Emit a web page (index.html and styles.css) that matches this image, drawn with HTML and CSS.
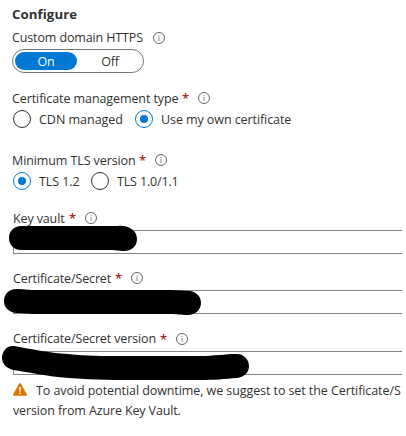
FILE: index.html
```
<!DOCTYPE html>
<html lang="en">
<head>
<meta charset="utf-8">
<title>Configure</title>
<link rel="stylesheet" href="styles.css">
</head>
<body>
<svg class="defs" width="0" height="0" aria-hidden="true">
  <symbol id="info" viewBox="0 0 12 12"><circle cx="6" cy="6" r="5.5" fill="none" stroke="#666" stroke-width="1"/><path d="M6 5v4M6 3v1.2" stroke="#888" stroke-width="1" fill="none"/></symbol>
</svg>
<main class="panel">
  <h1 class="title">Configure</h1>
  <div class="label https"><span class="text">Custom domain HTTPS</span><svg class="info"><use href="#info"/></svg></div>
  <div class="toggle"><span class="on">On</span><span class="off">Off</span></div>

  <div class="label cert-type"><span class="text">Certificate management type</span><b class="req">*</b><svg class="info"><use href="#info"/></svg></div>
  <div class="radios">
    <span class="radio"></span><span class="option cdn">CDN managed</span>
    <span class="radio checked"></span><span class="option own">Use my own certificate</span>
  </div>

  <div class="label tls"><span class="text">Minimum TLS version</span><b class="req">*</b><svg class="info"><use href="#info"/></svg></div>
  <div class="radios">
    <span class="radio checked"></span><span class="option tls12">TLS 1.2</span>
    <span class="radio"></span><span class="option tls10">TLS 1.0/1.1</span>
  </div>

  <div class="label vault"><span class="text">Key vault</span><b class="req">*</b><svg class="info"><use href="#info"/></svg></div>
  <div class="field"><svg class="mark" width="250" height="36" viewBox="0 -6 250 36"><path d="M21 -4H118C126 -5 137 -1 137 9C137 17 131 21 124 21C118 21 116 20 108 20H21C13 20 9 14 9 8C9 1 14 -4 21 -4Z"/></svg></div>

  <div class="label secret"><span class="text">Certificate/Secret</span><b class="req">*</b><svg class="info"><use href="#info"/></svg></div>
  <div class="field"><svg class="mark" width="250" height="36" viewBox="0 -6 250 36"><path d="M16 -1C24 -1 26 0 35 0H170C178 0 184 1 190 1C197 2 201 7 201 13C201 20 195 25 188 25C180 25 177 24 168 24H35C27 24 22 23 16 23C8 22 4 17 4 11C4 4 9 -1 16 -1Z"/></svg></div>

  <div class="label version"><span class="text">Certificate/Secret version</span><b class="req">*</b><svg class="info"><use href="#info"/></svg></div>
  <div class="field"><svg class="mark" width="250" height="36" viewBox="0 -6 250 36"><path d="M14 -5C32 -2 48 2 68 3C88 5 100 5 125 5H200C214 5 225 3 237 3C244 3 249 9 249 15C249 22 244 26 237 27C225 28 214 29 200 29H125C98 29 78 28 58 26C40 24 28 21 13 19C6 17 2 12 2 7C2 0 7 -6 14 -5Z"/></svg></div>

  <div class="notice">
    <div class="line"><svg class="warn" width="14" height="13" viewBox="0 0 14 13"><path d="M6.1.7Q7 -.5 7.9.7L13.8 11.3Q14.2 12.7 12.9 12.7H1.1Q-.2 12.7.2 11.3Z" fill="#db7500"/><path d="M6.1 4H7.9L7.6 8.5H6.4Z" fill="#fff"/><circle cx="7" cy="10.3" r=".9" fill="#fff"/></svg><span class="sentence">To avoid potential downtime, we suggest to set the Certificate/S</span></div>
    <div class="line"><span class="closing">version from Azure Key Vault.</span></div>
  </div>
</main>
</body>
</html>
```
FILE: styles.css
```
* { box-sizing: border-box; }
body {
  margin: 0;
  background: #fff;
  color: #323130;
  font: 12.5px/20px "Open Sans", "Noto Sans", sans-serif;
  letter-spacing: -.13px;
  overflow: hidden;
}
.defs { display: block; height: 0; }
.panel { width: 402px; padding: 4px 0 0 12px; height: 436px; }
.title { margin: 0 0 3px; font-size: 13.2px; line-height: 20px; font-weight: 700; letter-spacing: .1px; }
.label { display: flex; align-items: center; height: 22px; white-space: nowrap; }
.text { flex: none; padding-top: 1px; }
.req { width: 6px; margin-left: 4px; color: #a4262c; font-size: 13px; font-weight: 600; }
.info { width: 12px; height: 12px; margin-left: 10px; flex: none; }
.https .text { width: 131px; padding-top: 0; }
.cert-type { margin-top: 14px; }
.cert-type .text { width: 166px; letter-spacing: -.09px; }
.tls { margin-top: 20px; }
.tls .text { width: 123px; letter-spacing: -.1px; }
.vault { margin: 16px 0 1px; padding-left: 1px; }
.vault .text { width: 52px; }
.secret { margin: 13px 0 1px; padding-left: 1px; }
.secret .text { width: 98px; }
.version { margin: 14px 0 1px; padding-left: 1px; }
.version .text { width: 143px; padding-top: 0; }
.toggle { display: flex; width: 132px; height: 24px; padding: 2px; border: 1px solid #777; border-radius: 12px; line-height: 19px; text-align: center; }
.on { width: 62px; height: 18px; border-radius: 9px; background: #0078d4; color: #fff; }
.off { flex: 1; padding-left: 2px; }
.radios { display: flex; align-items: center; height: 20px; padding-left: 1px; white-space: nowrap; }
.radio { flex: none; display: grid; place-items: center; width: 18px; height: 18px; border: 1px solid #323130; border-radius: 50%; }
.checked { border-color: #0078d4; }
.checked::after { content: ""; width: 8px; height: 8px; border-radius: 50%; background: #0078d4; }
.option { margin-left: 8px; padding-top: 1px; letter-spacing: -.08px; }
.cdn { width: 96px; letter-spacing: -.02px; }
.tls12 { width: 52px; }
.tls10 { letter-spacing: -.15px; margin-left: 8px; }
.field { position: relative; height: 24px; margin-left: 1px; border: 1px solid #848484; border-right: 0; }
.mark { position: absolute; left: -14px; top: -7px; }
.notice { margin: 6px 0 0 1px; white-space: nowrap; }
.line { display: flex; align-items: center; height: 20px; }
.warn { flex: none; margin: -3px 9px 0 0; }
.sentence { letter-spacing: -.08px; }
```
